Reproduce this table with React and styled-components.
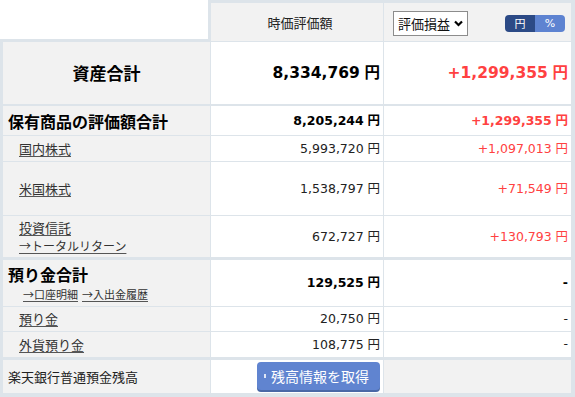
import React from 'react';
import styled, { createGlobalStyle } from 'styled-components';

const BORDER = '#dde4ea';
const GRAY = '#f2f2f2';
const RED = '#ff4141';

const Global = createGlobalStyle`
  html, body { margin: 0; padding: 0; background: #fff; }
  body {
    font-family: "DejaVu Sans", "Noto Sans CJK JP", sans-serif;
    color: #222;
    -webkit-font-smoothing: antialiased;
  }
  * { box-sizing: border-box; }
`;

const Page = styled.div`
  width: 575px;
  height: 397px;
  overflow: hidden;
`;

const Row = styled.div`
  display: grid;
  grid-template-columns: 211px 173px 191px;
  height: ${(p) => p.$h}px;
`;

const Corner = styled.div`
  background: #fff;
  border-right: 3px solid ${BORDER};
  border-bottom: 3px solid ${BORDER};
`;

const HeadCell = styled.div`
  background: ${GRAY};
  border-top: 3px solid ${BORDER};
  border-bottom: 1px solid ${BORDER};
  border-right: ${(p) => (p.$last ? 4 : 1)}px solid ${BORDER};
  display: flex;
  align-items: center;
  justify-content: ${(p) => (p.$last ? 'space-between' : 'center')};
  padding: ${(p) => (p.$last ? '0 6px 0 9px' : '0 0 0 6px')};
  font-family: "Noto Sans CJK JP", sans-serif;
  font-size: 13px;
  color: #222;
`;

const LabelCell = styled.div`
  background: ${GRAY};
  border-left: 3px solid ${BORDER};
  border-right: 1px solid ${BORDER};
  border-bottom: ${(p) => p.$bb}px solid ${BORDER};
  display: flex;
  flex-direction: column;
  justify-content: center;
  align-items: ${(p) => (p.$center ? 'center' : 'flex-start')};
  padding-left: ${(p) => (p.$center ? 0 : p.$indent ? 16 : 5)}px;
  font-family: "Noto Sans CJK JP", sans-serif;
`;

const ValueCell = styled.div`
  background: ${(p) => (p.$gray ? GRAY : '#fff')};
  border-right: ${(p) => (p.$last ? 4 : 1)}px solid ${BORDER};
  border-bottom: ${(p) => p.$bb}px solid ${BORDER};
  display: flex;
  align-items: center;
  justify-content: flex-end;
  padding-right: 3px;
`;

const Title = styled.span`
  font-size: ${(p) => p.$size}px;
  font-weight: bold;
  color: #000;
  line-height: 22px;
`;

const PlainLabel = styled.span`
  font-size: 13px;
  color: #222;
  line-height: 18px;
`;

const Link = styled.a`
  font-size: ${(p) => p.$size || 13}px;
  color: #333;
  text-decoration: underline;
  text-decoration-color: #555;
  text-underline-offset: 2px;
  line-height: 18px;
  cursor: pointer;
`;

const LinkLine = styled.div`
  display: flex;
  gap: ${(p) => p.$gap || 0}px;
  padding-left: ${(p) => p.$pad || 0}px;
`;

const Amount = styled.span`
  font-family: "DejaVu Sans", "Noto Sans CJK JP", sans-serif;
  font-size: ${(p) => p.$size}px;
  font-weight: ${(p) => (p.$bold ? 'bold' : 'normal')};
  color: ${(p) => (p.$red ? RED : p.$bold ? '#000' : '#222')};
  white-space: nowrap;
  line-height: 1;
`;

const Yen = styled.span`
  font-family: "Noto Sans CJK JP", sans-serif;
  margin-left: 0.3em;
`;

const SelectBox = styled.div`
  width: 75px;
  height: 25px;
  border: 1px solid #8c8c8c;
  background: #fff;
  display: flex;
  align-items: center;
  justify-content: space-between;
  padding: 0 4px 0 4px;
  font-size: 13px;
  color: #111;
  white-space: nowrap;
  margin-top: 2px;
  flex-shrink: 0;
`;

const Toggle = styled.div`
  display: flex;
  border-radius: 4px;
  overflow: hidden;
  height: 17px;
  margin-top: 2px;
`;

const ToggleItem = styled.span`
  width: 30px;
  display: flex;
  align-items: center;
  justify-content: center;
  background: ${(p) => (p.$active ? '#2c4a86' : '#5e83d1')};
  color: #fff;
  font-family: "DejaVu Sans", "Noto Sans CJK JP", sans-serif;
  font-size: 11px;
`;

const FetchButton = styled.button`
  height: 28px;
  width: 123px;
  margin-bottom: 2px;
  border: none;
  border-radius: 4px;
  background: #6084d0;
  box-shadow: 0 2px 0 #4a68a6;
  color: #fff;
  font-family: "Noto Sans CJK JP", sans-serif;
  font-size: 14px;
  display: flex;
  align-items: center;
  padding: 0 0 0 7px;
  gap: 5px;
  cursor: pointer;
`;

const Bullet = styled.span`
  display: inline-block;
  width: 2px;
  height: 4px;
  background: rgba(255, 255, 255, 0.8);
`;

const Chevron = () => (
  <svg width="9" height="7" viewBox="0 0 9 7" style={{ flexShrink: 0 }}>
    <path d="M1 1.5 L4.5 5 L8 1.5" fill="none" stroke="#000" strokeWidth="2.2" />
  </svg>
);

const Money = ({ v, size, bold, red }) => (
  <Amount $size={size} $bold={bold} $red={red}>
    {v}
    {v !== '-' && <Yen>円</Yen>}
  </Amount>
);

export default function App() {
  return (
    <Page>
      <Global />
      <Row $h={42}>
        <Corner />
        <HeadCell>時価評価額</HeadCell>
        <HeadCell $last>
          <SelectBox>
            <span>評価損益</span>
            <Chevron />
          </SelectBox>
          <Toggle>
            <ToggleItem $active>円</ToggleItem>
            <ToggleItem>%</ToggleItem>
          </Toggle>
        </HeadCell>
      </Row>

      <Row $h={64}>
        <LabelCell $bb={2} $center>
          <Title $size={17}>資産合計</Title>
        </LabelCell>
        <ValueCell $bb={2}>
          <Money v="8,334,769" size={15.5} bold />
        </ValueCell>
        <ValueCell $bb={2} $last>
          <Money v="+1,299,355" size={15.5} bold red />
        </ValueCell>
      </Row>

      <Row $h={30}>
        <LabelCell $bb={1}>
          <Title $size={16}>保有商品の評価額合計</Title>
        </LabelCell>
        <ValueCell $bb={1}>
          <Money v="8,205,244" size={12.5} bold />
        </ValueCell>
        <ValueCell $bb={1} $last>
          <Money v="+1,299,355" size={12.5} bold red />
        </ValueCell>
      </Row>

      <Row $h={26}>
        <LabelCell $bb={1} $indent>
          <Link>国内株式</Link>
        </LabelCell>
        <ValueCell $bb={1}>
          <Money v="5,993,720" size={12.5} />
        </ValueCell>
        <ValueCell $bb={1} $last>
          <Money v="+1,097,013" size={12.5} red />
        </ValueCell>
      </Row>

      <Row $h={54}>
        <LabelCell $bb={1} $indent>
          <Link>米国株式</Link>
        </LabelCell>
        <ValueCell $bb={1}>
          <Money v="1,538,797" size={12.5} />
        </ValueCell>
        <ValueCell $bb={1} $last>
          <Money v="+71,549" size={12.5} red />
        </ValueCell>
      </Row>

      <Row $h={44}>
        <LabelCell $bb={3} $indent>
          <Link>投資信託</Link>
          <Link $size={12}>→トータルリターン</Link>
        </LabelCell>
        <ValueCell $bb={3}>
          <Money v="672,727" size={12.5} />
        </ValueCell>
        <ValueCell $bb={3} $last>
          <Money v="+130,793" size={12.5} red />
        </ValueCell>
      </Row>

      <Row $h={47}>
        <LabelCell $bb={1}>
          <Title $size={16}>預り金合計</Title>
          <LinkLine $pad={15} $gap={4}>
            <Link $size={11}>→口座明細</Link>
            <Link $size={11}>→入出金履歴</Link>
          </LinkLine>
        </LabelCell>
        <ValueCell $bb={1}>
          <Money v="129,525" size={12.5} bold />
        </ValueCell>
        <ValueCell $bb={1} $last>
          <Money v="-" size={12.5} bold />
        </ValueCell>
      </Row>

      <Row $h={25}>
        <LabelCell $bb={1} $indent>
          <Link>預り金</Link>
        </LabelCell>
        <ValueCell $bb={1}>
          <Money v="20,750" size={12.5} />
        </ValueCell>
        <ValueCell $bb={1} $last>
          <Money v="-" size={12.5} />
        </ValueCell>
      </Row>

      <Row $h={28}>
        <LabelCell $bb={3} $indent>
          <Link>外貨預り金</Link>
        </LabelCell>
        <ValueCell $bb={3}>
          <Money v="108,775" size={12.5} />
        </ValueCell>
        <ValueCell $bb={3} $last>
          <Money v="-" size={12.5} />
        </ValueCell>
      </Row>

      <Row $h={37}>
        <LabelCell $bb={4}>
          <PlainLabel>楽天銀行普通預金残高</PlainLabel>
        </LabelCell>
        <ValueCell $bb={4}>
          <FetchButton>
            <Bullet />
            残高情報を取得
          </FetchButton>
        </ValueCell>
        <ValueCell $bb={4} $last $gray />
      </Row>
    </Page>
  );
}
